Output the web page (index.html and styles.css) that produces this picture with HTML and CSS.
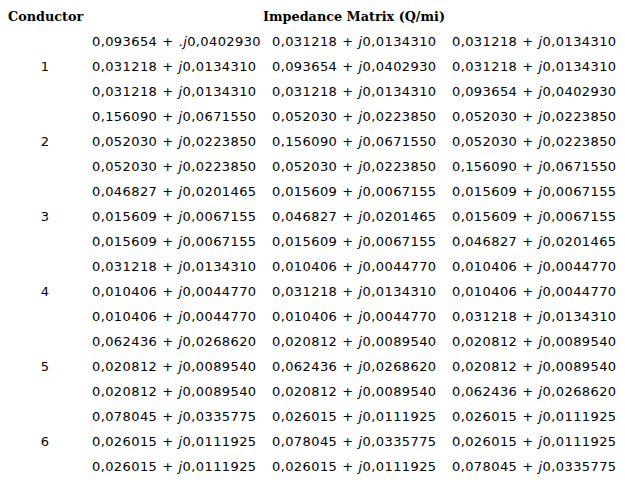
FILE: index.html
```html
<!DOCTYPE html>
<html>
<head>
<meta charset="utf-8">
<link rel="stylesheet" href="styles.css">
</head>
<body>
<div class="table">
  <div class="hcell cond">Conductor</div>
  <div class="hcell matrix">Impedance Matrix (Q/mi)</div>

  <div class="c"></div><div class="d">0,093654 + .<i>j</i>0,0402930</div><div class="d">0,031218 + <i>j</i>0,0134310</div><div class="d">0,031218 + <i>j</i>0,0134310</div>
  <div class="c">1</div><div class="d">0,031218 + <i>j</i>0,0134310</div><div class="d">0,093654 + <i>j</i>0,0402930</div><div class="d">0,031218 + <i>j</i>0,0134310</div>
  <div class="c"></div><div class="d">0,031218 + <i>j</i>0,0134310</div><div class="d">0,031218 + <i>j</i>0,0134310</div><div class="d">0,093654 + <i>j</i>0,0402930</div>

  <div class="c"></div><div class="d">0,156090 + <i>j</i>0,0671550</div><div class="d">0,052030 + <i>j</i>0,0223850</div><div class="d">0,052030 + <i>j</i>0,0223850</div>
  <div class="c">2</div><div class="d">0,052030 + <i>j</i>0,0223850</div><div class="d">0,156090 + <i>j</i>0,0671550</div><div class="d">0,052030 + <i>j</i>0,0223850</div>
  <div class="c"></div><div class="d">0,052030 + <i>j</i>0,0223850</div><div class="d">0,052030 + <i>j</i>0,0223850</div><div class="d">0,156090 + <i>j</i>0,0671550</div>

  <div class="c"></div><div class="d">0,046827 + <i>j</i>0,0201465</div><div class="d">0,015609 + <i>j</i>0,0067155</div><div class="d">0,015609 + <i>j</i>0,0067155</div>
  <div class="c">3</div><div class="d">0,015609 + <i>j</i>0,0067155</div><div class="d">0,046827 + <i>j</i>0,0201465</div><div class="d">0,015609 + <i>j</i>0,0067155</div>
  <div class="c"></div><div class="d">0,015609 + <i>j</i>0,0067155</div><div class="d">0,015609 + <i>j</i>0,0067155</div><div class="d">0,046827 + <i>j</i>0,0201465</div>

  <div class="c"></div><div class="d">0,031218 + <i>j</i>0,0134310</div><div class="d">0,010406 + <i>j</i>0,0044770</div><div class="d">0,010406 + <i>j</i>0,0044770</div>
  <div class="c">4</div><div class="d">0,010406 + <i>j</i>0,0044770</div><div class="d">0,031218 + <i>j</i>0,0134310</div><div class="d">0,010406 + <i>j</i>0,0044770</div>
  <div class="c"></div><div class="d">0,010406 + <i>j</i>0,0044770</div><div class="d">0,010406 + <i>j</i>0,0044770</div><div class="d">0,031218 + <i>j</i>0,0134310</div>

  <div class="c"></div><div class="d">0,062436 + <i>j</i>0,0268620</div><div class="d">0,020812 + <i>j</i>0,0089540</div><div class="d">0,020812 + <i>j</i>0,0089540</div>
  <div class="c">5</div><div class="d">0,020812 + <i>j</i>0,0089540</div><div class="d">0,062436 + <i>j</i>0,0268620</div><div class="d">0,020812 + <i>j</i>0,0089540</div>
  <div class="c"></div><div class="d">0,020812 + <i>j</i>0,0089540</div><div class="d">0,020812 + <i>j</i>0,0089540</div><div class="d">0,062436 + <i>j</i>0,0268620</div>

  <div class="c"></div><div class="d">0,078045 + <i>j</i>0,0335775</div><div class="d">0,026015 + <i>j</i>0,0111925</div><div class="d">0,026015 + <i>j</i>0,0111925</div>
  <div class="c">6</div><div class="d">0,026015 + <i>j</i>0,0111925</div><div class="d">0,078045 + <i>j</i>0,0335775</div><div class="d">0,026015 + <i>j</i>0,0111925</div>
  <div class="c"></div><div class="d">0,026015 + <i>j</i>0,0111925</div><div class="d">0,026015 + <i>j</i>0,0111925</div><div class="d">0,078045 + <i>j</i>0,0335775</div>
</div>
</body>
</html>
```
FILE: styles.css
```css
html, body {
  margin: 0;
  padding: 0;
  background: #ffffff;
}
body {
  padding: 5px 0 0 8px;
  color: #000000;
}
.table {
  display: grid;
  grid-template-columns: 74px 180px 180px 180px;
  column-gap: 0;
  grid-auto-rows: 25px;
  grid-template-rows: 24px;
}
.hcell {
  font-family: "DejaVu Serif", serif;
  font-weight: bold;
  font-size: 12.8px;
  line-height: 24px;
  white-space: nowrap;
}
.cond {
  text-align: left;
}
.matrix {
  grid-column: 2 / 5;
  padding-left: 10px;
  width: 524px;
  text-align: center;
}
.c {
  font-family: "DejaVu Sans", sans-serif;
  font-size: 13px;
  line-height: 25px;
  text-align: center;
}
.d {
  font-family: "DejaVu Sans", sans-serif;
  font-size: 13px;
  line-height: 25px;
  white-space: nowrap;
  padding-left: 10px;
  letter-spacing: 0.4px;
  word-spacing: 0.5px;
}
.d i {
  font-style: italic;
}
```
